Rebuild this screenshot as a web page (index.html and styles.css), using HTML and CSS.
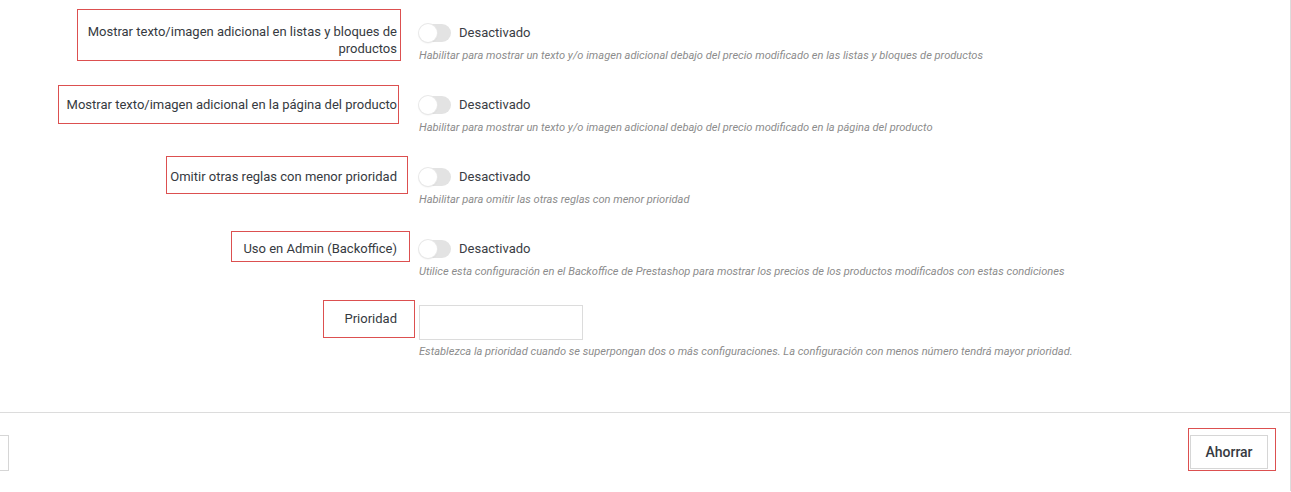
FILE: index.html
```html
<!DOCTYPE html>
<html lang="es">
<head>
<meta charset="utf-8">
<title>Configuración</title>
<link rel="stylesheet" href="styles.css">
</head>
<body>
<div class="card">
  <div class="card-body">
    <div class="form-group">
      <div class="label-cell"><label class="mark mark-1">Mostrar texto/imagen adicional en listas y bloques de productos</label></div>
      <div class="control">
        <div class="switch-line"><span class="switch"><span class="knob"></span></span><span class="state">Desactivado</span></div>
        <p class="hint">Habilitar para mostrar un texto y/o imagen adicional debajo del precio modificado en las listas y bloques de productos</p>
      </div>
    </div>
    <div class="form-group">
      <div class="label-cell"><label class="mark mark-2">Mostrar texto/imagen adicional en la página del producto</label></div>
      <div class="control">
        <div class="switch-line"><span class="switch"><span class="knob"></span></span><span class="state">Desactivado</span></div>
        <p class="hint">Habilitar para mostrar un texto y/o imagen adicional debajo del precio modificado en la página del producto</p>
      </div>
    </div>
    <div class="form-group">
      <div class="label-cell"><label class="mark mark-3">Omitir otras reglas con menor prioridad</label></div>
      <div class="control">
        <div class="switch-line"><span class="switch"><span class="knob"></span></span><span class="state">Desactivado</span></div>
        <p class="hint">Habilitar para omitir las otras reglas con menor prioridad</p>
      </div>
    </div>
    <div class="form-group">
      <div class="label-cell"><label class="mark mark-4">Uso en Admin (Backoffice)</label></div>
      <div class="control">
        <div class="switch-line"><span class="switch"><span class="knob"></span></span><span class="state">Desactivado</span></div>
        <p class="hint">Utilice esta configuración en el Backoffice de Prestashop para mostrar los precios de los productos modificados con estas condiciones</p>
      </div>
    </div>
    <div class="form-group form-group-input">
      <div class="label-cell"><label class="mark mark-5" for="prio">Prioridad</label></div>
      <div class="control">
        <input class="text-input" id="prio" type="text">
        <p class="hint">Establezca la prioridad cuando se superpongan dos o más configuraciones. La configuración con menos número tendrá mayor prioridad.</p>
      </div>
    </div>
  </div>
  <div class="card-footer">
    <button class="btn btn-back" type="button" aria-label="Volver"></button>
    <span class="mark mark-save"><button class="btn btn-save" type="submit">Ahorrar</button></span>
  </div>
</div>
</body>
</html>
```
FILE: styles.css
```css
html, body {
  margin: 0;
  padding: 0;
  background: #ffffff;
}
body {
  font-family: Roboto, "Liberation Sans", Arial, sans-serif;
  color: #363a41;
  font-size: 13px;
}
.card {
  width: 1291px;
  box-sizing: border-box;
  border-right: 1px solid #dcdcdc;
}
.card-body {
  padding: 22px 0 22px 0;
}
.form-group {
  display: grid;
  grid-template-columns: 397px 1fr;
  column-gap: 22px;
  margin-bottom: 31px;
}
.form-group-input {
  margin-top: -5px;
}
.label-cell {
  height: 22px;
  display: flex;
  justify-content: flex-end;
  align-items: flex-start;
}
.mark {
  border: 1px solid #dc5050;
  box-sizing: border-box;
}
label.mark {
  display: block;
  flex: none;
  font-size: 13px;
  line-height: 17px;
  text-align: right;
  color: #363a41;
}
.mark-1 {
  width: 324px;
  margin-top: -13px;
  margin-right: -4px;
  padding: 13px 3px 3px 6px;
}
.mark-2 {
  margin-top: -9px;
  margin-right: -2px;
  padding: 10px 1px 10px 8px;
  white-space: nowrap;
}
.mark-3 {
  margin-top: -10px;
  margin-right: -11px;
  padding: 11px 10px 8px 3px;
  white-space: nowrap;
}
.mark-4 {
  margin-top: -7px;
  margin-right: -13px;
  padding: 8px 12px 4px 11px;
  white-space: nowrap;
}
.mark-5 {
  margin-top: -5px;
  margin-right: -18px;
  padding: 9px 17px 10px 21px;
  white-space: nowrap;
}
.control {
  min-width: 0;
}
.switch-line {
  height: 22px;
  display: flex;
  align-items: center;
  gap: 8px;
}
.switch {
  position: relative;
  width: 32px;
  height: 18px;
  border-radius: 9px;
  background: #e3e3e3;
  flex: none;
}
.knob {
  position: absolute;
  left: 0;
  top: 0;
  width: 18px;
  height: 18px;
  border-radius: 50%;
  background: #ffffff;
  box-shadow: 0 0 0 1px #e8e8e8, 0 1px 2px rgba(0, 0, 0, 0.12);
}
.state {
  font-size: 13px;
  line-height: 22px;
  color: #3a3d44;
}
.hint {
  margin: 4px 0 0 0;
  font-size: 11.1px;
  font-style: italic;
  line-height: 15px;
  color: #8c8c8c;
  white-space: nowrap;
}
.text-input {
  display: block;
  width: 164px;
  height: 35px;
  box-sizing: border-box;
  border: 1px solid #dcdcdc;
  background: #fff;
  margin: 0;
  padding: 0 8px;
  font-family: inherit;
}
.card-footer {
  border-top: 1px solid #dcdcdc;
  display: flex;
  justify-content: space-between;
  align-items: flex-end;
  padding: 15px 14px 20px 0;
}
.btn {
  font-family: Roboto, "Liberation Sans", Arial, sans-serif;
  background: #ffffff;
  border: 1px solid #d6d6d6;
  color: #363a41;
  margin: 0;
  box-sizing: border-box;
}
.btn-back {
  width: 90px;
  height: 36px;
  margin-left: -81px;
}
.mark-save {
  display: flex;
  padding: 6px 7px 1px 1px;
}
.btn-save {
  width: 78px;
  height: 34px;
  font-size: 14px;
  font-weight: 500;
}
```
